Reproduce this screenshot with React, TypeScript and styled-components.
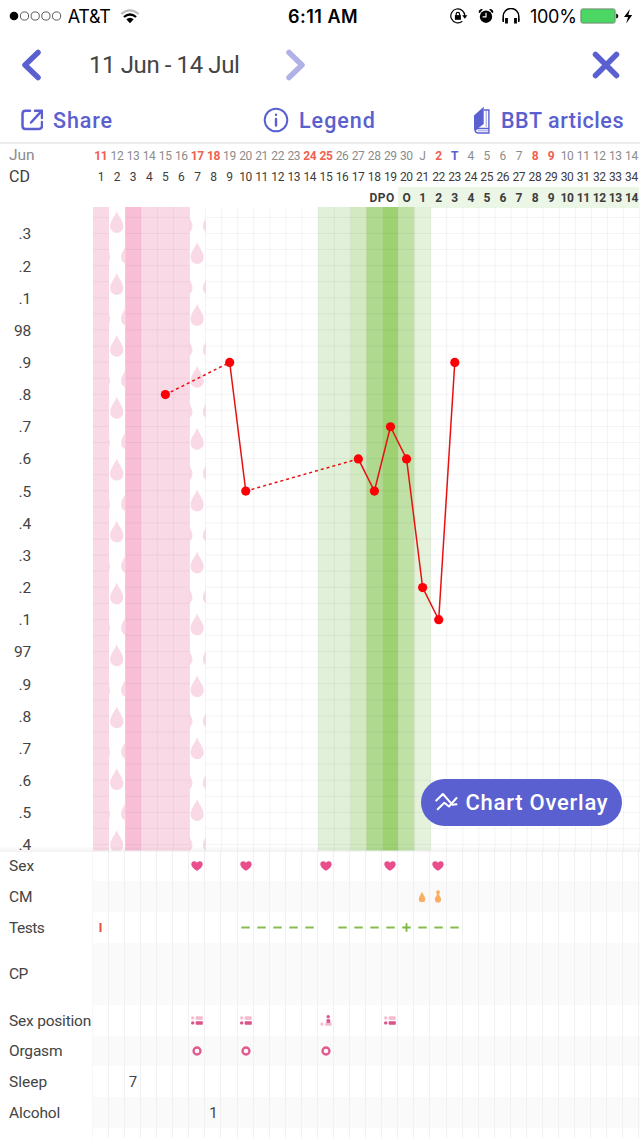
import React from "react";
import styled, { createGlobalStyle } from "styled-components";

const COLS = 34;
const COL = 16.08;
const LEFT = 92.8;
const PLOT_W = COLS * COL;
const PLOT_H = 643.5;
const STEP = 32.16;
const INDIGO = "#5a60cf";

const Global = createGlobalStyle`
  * { box-sizing: border-box; }
  body { margin: 0; background: #fff; font-family: Roboto, "Open Sans", sans-serif; color: #444; font-variant-ligatures: none; }
  svg { display: block; flex: none; }
`;

const Screen = styled.main`
  width: 640px;
  height: 1138px;
  overflow: hidden;
  background: #fff;
`;

const StatusBar = styled.header`
  height: 32px;
  display: grid;
  grid-template-columns: 288px 162px 1fr;
  align-items: center;
  font-family: Inter, "Liberation Sans", sans-serif;
  font-size: 18px;
  color: #000;
`;

const StatusGroup = styled.div<{ $pad?: number }>`
  display: flex;
  align-items: center;
  height: 32px;
  padding-left: ${(p) => p.$pad ?? 0}px;
`;

const Label = styled.span<{ $w?: number; $size?: number; $weight?: number; $track?: number }>`
  display: block;
  white-space: nowrap;
  flex: none;
  width: ${(p) => (p.$w ? p.$w + "px" : "auto")};
  font-size: ${(p) => (p.$size ? p.$size + "px" : "inherit")};
  font-weight: ${(p) => p.$weight ?? 400};
  letter-spacing: ${(p) => p.$track ?? 0}px;
`;

const NavBar = styled.nav`
  height: 66px;
  display: flex;
  align-items: center;
  padding: 0 19px 0 21px;
`;

const IconButton = styled.button<{ $ml?: string }>`
  border: 0;
  padding: 0;
  background: none;
  margin-left: ${(p) => p.$ml ?? "0"};
`;

const Range = styled.h1`
  margin: 0 0 0 47px;
  width: 196px;
  font-size: 24px;
  font-weight: 400;
  letter-spacing: -0.4px;
  white-space: nowrap;
`;

const Actions = styled.div`
  height: 46px;
  display: grid;
  grid-template-columns: 243px 210px 1fr;
  padding-left: 20px;
  border-bottom: 2px solid #ececec;
`;

const Action = styled.a`
  display: flex;
  align-items: center;
  color: ${INDIGO};
  height: 44px;
`;

const DayRow = styled.div<{ $h: number; $size: number; $color: string; $bold?: boolean }>`
  display: grid;
  grid-template-columns: ${LEFT}px repeat(${COLS}, ${COL}px);
  height: ${(p) => p.$h}px;
  line-height: ${(p) => p.$h}px;
  font-size: ${(p) => p.$size}px;
  font-weight: ${(p) => (p.$bold ? 700 : 400)};
  color: ${(p) => p.$color};
  text-align: center;
  white-space: nowrap;
`;

const RowTitle = styled.div<{ $size: number }>`
  padding-left: 9px;
  text-align: left;
  font-size: ${(p) => p.$size}px;
`;

const Day = styled.span<{ $tone?: "weekend" | "today"; $tint?: boolean; $start?: number; $span?: number }>`
  display: flex;
  justify-content: center;
  min-width: 0;
  padding-top: 1px;
  letter-spacing: ${(p) => (p.$span ? 0.5 : -0.4)}px;
  grid-column: ${(p) => (p.$start ? p.$start : "auto")} / span ${(p) => p.$span ?? 1};
  background: ${(p) => (p.$tint ? "#ecf6e6" : "transparent")};
  ${(p) => p.$tone === "weekend" && "color:#f0604f;font-weight:700;"}
  ${(p) => p.$tone === "today" && `color:${INDIGO};font-weight:700;`}
`;

const ChartArea = styled.section`
  position: relative;
  display: flex;
  height: ${PLOT_H}px;
`;

const Axis = styled.div`
  width: ${LEFT}px;
  padding-top: 11.4px;
  flex: none;
`;

const Tick = styled.div`
  width: 31px;
  height: ${STEP}px;
  line-height: ${STEP}px;
  text-align: right;
  font-size: 15.5px;
  letter-spacing: -0.2px;
  &:last-child { height: 24px; }
`;

const ChartEdge = styled.div`
  position: absolute;
  left: 0;
  right: 0;
  bottom: -1px;
  height: 5px;
  background: linear-gradient(rgba(0, 0, 0, 0.01), rgba(0, 0, 0, 0.05));
`;

const OverlayButton = styled.button`
  position: absolute;
  right: 18.5px;
  bottom: 25px;
  width: 201px;
  height: 46.5px;
  border: 0;
  border-radius: 24px;
  background: ${INDIGO};
  color: #fff;
  display: flex;
  align-items: center;
  padding: 0 0 0 14px;
  font-family: inherit;
`;

const LogRow = styled.div<{ $h: number; $shade: boolean }>`
  display: grid;
  grid-template-columns: ${LEFT}px ${PLOT_W}px;
  height: ${(p) => p.$h}px;
  align-items: center;
  & > div:last-child { background: ${(p) => (p.$shade ? "#fafafa" : "#fff")}; }
`;

const LogTitle = styled.span<{ $track?: number }>`
  padding: 1px 0 0 9px;
  font-size: 15.5px;
  white-space: nowrap;
  letter-spacing: ${(p) => p.$track ?? 0}px;
`;

const LogCells = styled.div`
  display: grid;
  grid-template-columns: repeat(${COLS}, ${COL}px);
  height: 100%;
`;

const LogCell = styled.div`
  display: flex;
  align-items: center;
  justify-content: center;
  padding-left: 1px;
  border-right: 1px solid #f1f1f1;
  font-size: 15px;
  &:first-child { box-shadow: -1px 0 #f7f7f7; }
`;

const weekendDays = [11, 17, 18, 24, 25];
const days = Array.from({ length: COLS }, (_, i) => {
  if (i < 20) return { text: String(11 + i), tone: weekendDays.includes(11 + i) ? "weekend" : undefined };
  const d = i - 19;
  return {
    text: d === 1 ? "J" : d === 3 ? "T" : String(d),
    tone: d === 3 ? "today" : [2, 8, 9].includes(d) ? "weekend" : undefined,
  };
}) as { text: string; tone?: "weekend" | "today" }[];

const ticks = [".3", ".2", ".1", "98", ".9", ".8", ".7", ".6", ".5", ".4", ".3", ".2", ".1", "97", ".9", ".8", ".7", ".6", ".5", ".4"];

const bands: [number, number, string][] = [
  [1, 1, "#fad9e6"], [3, 1, "#f8bed5"], [4, 3, "#fad9e6"],
  [15, 2, "#e1f0d8"], [17, 1, "#d2e9c1"], [18, 1, "#aed98e"],
  [19, 1, "#9dd172"], [20, 1, "#bfe1a5"], [21, 1, "#e4f2dc"],
];

const temps: [number, number][] = [
  [5, 97.8], [9, 97.9], [10, 97.5], [17, 97.6], [18, 97.5], [19, 97.7],
  [20, 97.6], [21, 97.2], [22, 97.1], [23, 97.9],
];

const cx = (cd: number) => (cd - 0.5) * COL;
const cy = (t: number) => 26.8 + (98.3 - t) * STEP * 10;

const DROP = "M0 0C1.3 5 6.6 9.5 6.6 15.4A6.6 6.6 0 0 1-6.6 15.4C-6.6 9.5-1.3 5 0 0Z";

function DropColumn({ cd, offset }: { cd: number; offset: number }) {
  const x = cx(cd) - 0.4;
  const rows = Array.from({ length: 23 }, (_, i) => i - 1);
  return (
    <svg x={(cd - 1) * COL} y={0} width={COL} height={PLOT_H} viewBox={`${(cd - 1) * COL} 0 ${COL} ${PLOT_H}`} fill="#fad9e6">
      {rows.map((i) => {
        const y = 4 + i * 30.95;
        return (i + offset) % 2 === 0 ? (
          <path key={i} d={DROP} transform={`translate(${x} ${y})`} />
        ) : (
          <g key={i}>
            <path d={DROP} transform={`translate(${x - (cd === 2 ? 13.2 : 11.2)} ${y})`} />
            <path d={DROP} transform={`translate(${x + (cd === 2 ? 10.9 : 12.3)} ${y})`} />
          </g>
        );
      })}
    </svg>
  );
}

function Plot() {
  return (
    <svg width={PLOT_W} height={PLOT_H} viewBox={`0 0 ${PLOT_W} ${PLOT_H}`}>
      {bands.map(([cd, n, fill]) => (
        <rect key={cd} x={(cd - 1) * COL} width={n * COL} height={PLOT_H} fill={fill} />
      ))}
      <DropColumn cd={2} offset={0} />
      <DropColumn cd={7} offset={1} />
      <g stroke="#000" strokeOpacity={0.05} strokeWidth={1}>
        {Array.from({ length: COLS - 2 }, (_, i) => i + 3).map((i) => (
          <line key={i} x1={i * COL} x2={i * COL} y1={0} y2={PLOT_H} />
        ))}
        {Array.from({ length: 40 }, (_, i) => 10.4 + (i * STEP) / 2).map((y) => (
          <React.Fragment key={y}>
            <line x1={0} x2={COL} y1={y} y2={y} />
            <line x1={COL * 2} x2={COL * 6} y1={y} y2={y} />
            <line x1={COL * 7} x2={PLOT_W} y1={y} y2={y} />
          </React.Fragment>
        ))}
      </g>
      {temps.slice(1).map(([cd, t], i) => {
        const [pcd, pt] = temps[i];
        return (
          <line key={cd} x1={cx(pcd)} y1={cy(pt)} x2={cx(cd)} y2={cy(t)} stroke="#e81111"
            strokeWidth={1.5} strokeDasharray={cd - pcd > 1 ? "3 3" : undefined} />
        );
      })}
      {temps.map(([cd, t]) => <circle key={cd} cx={cx(cd)} cy={cy(t)} r={4.6} fill="#fb0007" />)}
    </svg>
  );
}

const Heart = () => (
  <svg width="12" height="10" viewBox="0 0 12 10"><path fill="#ea4d8b" d="M6 9.8C4.9 9 .3 6.2.3 3.2.3 1.500 1.500.3 3.100.3 4.500.3 5.500 1 6 1.800 6.500 1 7.500.3 8.900.3 10.500.3 11.700 1.500 11.700 3.200 11.700 6.200 7.100 9 6 9.800Z" /></svg>
);
const Fluid = () => (
  <svg width="8" height="12" viewBox="0 0 8 12"><path fill="#f9ae64" d="M4 .5C4.500 3 7.200 5.200 7.200 8A3.200 3.200 0 0 1 .8 8C.8 5.200 3.500 3 4 .5Z" /></svg>
);
const Stretchy = () => (
  <svg width="8" height="13" viewBox="0 0 8 13"><path fill="#f9ae64" d="M4 .3A1.900 1.900 0 0 1 5.900 2.200C5.900 3.200 5.200 3.400 5.100 4.500 5 6 7.100 6.800 7.100 9.400A3.100 3.100 0 0 1 .9 9.400C.9 6.800 3 6 2.900 4.500 2.800 3.400 2.100 3.200 2.100 2.200A1.900 1.900 0 0 1 4 .3Z" /></svg>
);
const Minus = () => <svg width="9" height="9" viewBox="0 0 9 9"><path stroke="#86bd4f" strokeWidth="2" d="M.3 4.500h8.400" /></svg>;
const Plus = () => <svg width="9" height="9" viewBox="0 0 9 9"><path stroke="#7cb83e" strokeWidth="1.800" d="M.3 4.500h8.400M4.500.2v8.600" /></svg>;
const Bar = () => <svg width="3" height="9" viewBox="0 0 3 9"><path stroke="#e2513d" strokeWidth="2" d="M1.500 0v9" /></svg>;
const Ring = () => <svg width="10" height="10" viewBox="0 0 10 10"><circle cx="5" cy="5" r="3.500" fill="none" stroke="#e2588f" strokeWidth="2.300" /></svg>;
const Lying = () => (
  <svg width="12" height="9" viewBox="0 0 12 9">
    <g fill="#f5b9d1"><circle cx="1.700" cy="1.900" r="1.600" /><rect x="4.700" y=".3" width="7.100" height="3.400" rx=".6" /></g>
    <g fill="#dc5289"><circle cx="1.700" cy="6.900" r="1.700" /><rect x="4.700" y="5.200" width="7.100" height="3.500" rx=".6" /></g>
  </svg>
);
const Sitting = () => (
  <svg width="12" height="11" viewBox="0 0 12 11">
    <g fill="#f5b9d1"><circle cx="1.900" cy="9.100" r="1.600" /><path d="M5.200 10.700V8.500L6.500 7.400H11.600V10.700Z" /></g>
    <g fill="#dc5289"><circle cx="8.200" cy="1.800" r="1.700" /><rect x="6.500" y="4.300" width="3.700" height="3.500" /></g>
  </svg>
);

const fill = (cds: number[], el: React.ReactNode) => Object.fromEntries(cds.map((c) => [c, el]));

const logs: { title: string; h: number; track?: number; cells: Record<number, React.ReactNode> }[] = [
  { title: "Sex", h: 30.85, cells: fill([7, 10, 15, 19, 22], <Heart />) },
  { title: "CM", h: 30.85, cells: { 21: <Fluid />, 22: <Stretchy /> } },
  { title: "Tests", h: 30.85, track: -0.5, cells: { 1: <Bar />, ...fill([10, 11, 12, 13, 14, 16, 17, 18, 19, 21, 22, 23], <Minus />), 20: <Plus /> } },
  { title: "CP", h: 61.7, track: -0.7, cells: {} },
  { title: "Sex position", h: 30.85, track: -0.2, cells: { ...fill([7, 10, 19], <Lying />), 15: <Sitting /> } },
  { title: "Orgasm", h: 30.85, track: -0.2, cells: fill([7, 10, 15], <Ring />) },
  { title: "Sleep", h: 30.85, cells: { 3: "7" } },
  { title: "Alcohol", h: 30.85, track: -0.1, cells: { 8: "1" } },
  { title: "", h: 30.85, cells: {} },
];

const SignalDots = () => (
  <svg width="54" height="10" viewBox="0 0 54 10">
    <circle cx="5" cy="5" r="4.300" />
    {[15.5, 26.2, 36.9, 47.6].map((x) => <circle key={x} cx={x} cy="5" r="4.100" fill="none" stroke="#333" strokeWidth=".8" />)}
  </svg>
);
const Wifi = () => (
  <svg width="20" height="15" viewBox="0 0 20 15" fill="none">
    <path stroke="#bbb" strokeWidth="2" d="M1.300 5Q10-2.300 18.700 5" />
    <path stroke="#000" strokeWidth="2.200" d="M3.900 8Q10 3 16.100 8" />
    <path fill="#000" d="M6.300 10.300Q10 7.300 13.700 10.300L10 14.200Z" />
  </svg>
);
const RotationLock = () => (
  <svg width="18" height="16" viewBox="0 0 18 16" fill="none" stroke="#000">
    <path strokeWidth="1.200" d="M14.800 8.500A7 7 0 1 0 12.300 13.300M14.800 8A7 7 0 0 0 13.700 4.400" />
    <path fill="#000" stroke="none" d="M12.200 7.300H17.400L14.800 10.800Z" />
    <rect x="4.900" y="7.100" width="6" height="4.700" fill="#000" stroke="none" />
    <path strokeWidth="1.200" d="M6.200 7.300V6A1.700 1.700 0 0 1 9.600 6V7.300" />
  </svg>
);
const Alarm = () => (
  <svg width="16" height="16" viewBox="0 0 16 16">
    <circle cx="8" cy="8.700" r="6.200" />
    <path d="M.7 4.600A3 3 0 0 1 4.900 1.300L1.700 5ZM15.300 4.600A3 3 0 0 0 11.100 1.300L14.300 5Z" />
    <path d="M8 4.800V8.900H4.600" stroke="#fff" strokeWidth="1.200" fill="none" />
  </svg>
);
const Headphones = () => (
  <svg width="18" height="16" viewBox="0 0 18 16" fill="none">
    <path stroke="#000" strokeWidth="1.500" d="M1.200 12.500V8.300A7.800 7.800 0 0 1 16.800 8.300V12.500" />
    <path fill="#000" d="M.5 10.500H2V14H.5ZM3.100 10H5.900V15.500H3.100ZM12.100 10H14.900V15.500H12.100ZM16 10.500H17.500V14H16Z" />
  </svg>
);
const Battery = () => (
  <svg width="54" height="16" viewBox="0 0 54 16">
    <rect x=".9" y=".9" width="34.200" height="14.200" rx="2" fill="#4cd764" stroke="#66806a" strokeWidth=".9" />
    <path d="M36.200 5.500Q38.300 6 38.300 8T36.200 10.500Z" />
    <path d="M50 1L44 9H48L46.200 15.500 52.200 7H48.300Z" />
  </svg>
);

const ShareIcon = () => (
  <svg width="23" height="22" viewBox="0 0 23 22" fill="none" stroke={INDIGO} strokeWidth="2.500" strokeLinecap="round" strokeLinejoin="round">
    <path d="M10 1.700H5.500Q2.500 1.700 2.500 4.700V17Q2.500 20 5.500 20H19Q22 20 22 17V13M15 1.700H22V9M21.500 2.200L11 13.500" />
  </svg>
);
const InfoIcon = () => (
  <svg width="26" height="26" viewBox="0 0 26 26" fill="none" stroke={INDIGO}>
    <circle cx="13" cy="13" r="11.300" strokeWidth="2" />
    <path strokeWidth="2.400" strokeLinecap="round" d="M13 12V18.500M13 7.600V7.700" />
  </svg>
);
const BookIcon = () => (
  <svg width="18" height="28" viewBox="0 0 18 28">
    <path fill={INDIGO} d="M1 9.500L10.700.7V18L4.500 22.700C3 23 2.300 24 2.500 25.500Q1 24.500 1 22.500Z" />
    <path fill="none" stroke={INDIGO} strokeWidth="1.400" d="M10.800 4H15.900V22.500H5Q2.300 22.800 2.300 24.700T5 27H15.900V22.500" />
    <path fill="none" stroke={INDIGO} strokeWidth=".6" d="M4.800 24.800H15M13.200 4.500V21" />
  </svg>
);
const OverlayIcon = () => (
  <svg width="24" height="20" viewBox="0 0 24 20" fill="none" stroke="#fff" strokeWidth="2" strokeLinecap="round" strokeLinejoin="round">
    <path d="M1.300 8.500L7.900 2 17.500 12.800 21.500 12.300M2.700 17.300L9.300 10.700 14 14.500 21.500 6" />
  </svg>
);

export default function App() {
  return (
    <>
      <Global />
      <Screen>
        <StatusBar>
          <StatusGroup $pad={9}>
            <SignalDots />
            <Label $w={57} $track={-0.35}>&nbsp;AT&amp;T</Label>
            <Wifi />
          </StatusGroup>
          <Label $weight={600} $track={0.5}>6:11 AM</Label>
          <StatusGroup>
            <RotationLock />
            <StatusGroup $pad={10}><Alarm /></StatusGroup>
            <StatusGroup $pad={8}><Headphones /></StatusGroup>
            <StatusGroup $pad={10}><Label $w={50} $track={-0.3}>100%</Label></StatusGroup>
            <Battery />
          </StatusGroup>
        </StatusBar>
        <NavBar>
          <IconButton aria-label="Previous cycle">
            <svg width="21" height="32" viewBox="0 0 21 32"><path d="M17 3.500L4 16 17 28.500" fill="none" stroke={INDIGO} strokeWidth="5.500" strokeLinecap="round" strokeLinejoin="round" /></svg>
          </IconButton>
          <Range>11 Jun - 14 Jul</Range>
          <IconButton aria-label="Next cycle">
            <svg width="21" height="32" viewBox="0 0 21 32"><path d="M4 3.500L17 16 4 28.500" fill="none" stroke="#b0b2e7" strokeWidth="5.500" strokeLinecap="round" strokeLinejoin="round" /></svg>
          </IconButton>
          <IconButton aria-label="Close" $ml="auto">
            <svg width="30" height="30" viewBox="0 0 30 30"><path d="M4.500 4.500L25.500 25.500M25.500 4.500L4.500 25.500" stroke={INDIGO} strokeWidth="5.500" strokeLinecap="round" /></svg>
          </IconButton>
        </NavBar>
        <Actions>
          <Action><ShareIcon /><StatusGroup $pad={10}><Label $size={21.5} $weight={500} $track={0.9}>Share</Label></StatusGroup></Action>
          <Action><InfoIcon /><StatusGroup $pad={10}><Label $size={21.5} $weight={500} $track={1}>Legend</Label></StatusGroup></Action>
          <Action><BookIcon /><StatusGroup $pad={10}><Label $size={21.5} $weight={500} $track={0.55}>BBT articles</Label></StatusGroup></Action>
        </Actions>
        <DayRow $h={22} $size={12} $color="#8c8c8c">
          <RowTitle $size={15.5}>Jun</RowTitle>
          {days.map((d, i) => <Day key={i} $tone={d.tone}>{d.text}</Day>)}
        </DayRow>
        <DayRow $h={21} $size={12} $color="#3c3c3c">
          <RowTitle $size={16}>CD</RowTitle>
          {days.map((_, i) => <Day key={i}>{i + 1}</Day>)}
        </DayRow>
        <DayRow $h={20} $size={12} $color="#3c3c3c" $bold>
          <Day $start={19} $span={2}>DPO</Day>
          <Day $tint>O</Day>
          {Array.from({ length: 14 }, (_, i) => <Day key={i} $tint>{i + 1}</Day>)}
        </DayRow>
        <ChartArea>
          <Axis>{ticks.map((t, i) => <Tick key={i}>{t}</Tick>)}</Axis>
          <Plot />
          <ChartEdge />
          <OverlayButton>
            <OverlayIcon />
            <StatusGroup $pad={7}><Label $size={22} $weight={500} $track={0.75}>Chart Overlay</Label></StatusGroup>
          </OverlayButton>
        </ChartArea>
        {logs.map((row, r) => (
          <LogRow key={r} $h={row.h} $shade={r % 2 === 1}>
            <LogTitle $track={row.track}>{row.title}</LogTitle>
            <LogCells>
              {days.map((_, i) => <LogCell key={i}>{row.cells[i + 1]}</LogCell>)}
            </LogCells>
          </LogRow>
        ))}
      </Screen>
    </>
  );
}
